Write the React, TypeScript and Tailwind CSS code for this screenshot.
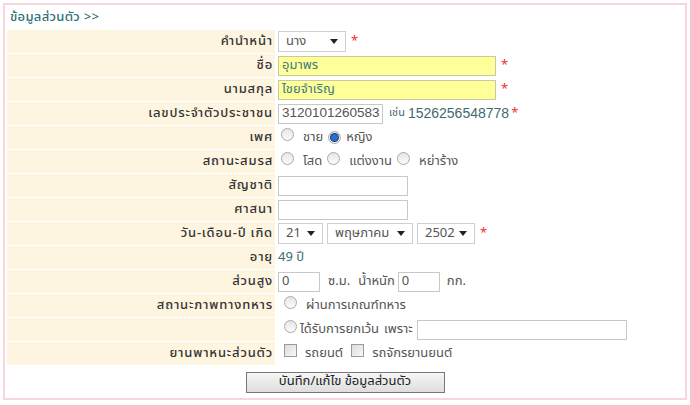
import React from 'react'

const font = { fontFamily: '"Noto Sans Thai", Tahoma, "DejaVu Sans", sans-serif' }
const num = { fontFamily: '"Liberation Sans", Arial, sans-serif' }

function Star() {
  return <span className="ml-[5px] text-[13px] leading-none text-[#e33]">*</span>
}

function Radio({ checked = false }: { checked?: boolean }) {
  return (
    <span className="inline-flex h-[13px] w-[13px] shrink-0 items-center justify-center rounded-full border border-[#a9a9a9] bg-gradient-to-b from-[#e6e6e6] to-[#fbfbfb]">
      {checked && <span className="h-[7px] w-[7px] rounded-full bg-[#2a6fc9] shadow-[0_0_0_1px_#173d7a]" />}
    </span>
  )
}

function Check() {
  return <span className="inline-block h-[13px] w-[13px] shrink-0 border border-[#9a9a9a] bg-gradient-to-br from-[#dcdcdc] to-[#f8f8f8]" />
}

function Select({ value, w }: { value: string; w: string }) {
  return (
    <div className={`flex h-[21px] items-center justify-between border border-[#cfcfcf] bg-white pl-[7px] pr-[7px] ${w}`}>
      <span className="text-[13px] text-[#555]">{value}</span>
      <svg width="8" height="5" viewBox="0 0 8 5"><path d="M0 0h8L4 5z" fill="#222" /></svg>
    </div>
  )
}

function Input({ value = '', w, yellow = false, digits = false }: { value?: string; w: string; yellow?: boolean; digits?: boolean }) {
  return (
    <div
      className={`flex h-[20px] items-center overflow-hidden border px-[3px] ${w} ${
        yellow ? 'border-[#c9c9a0] bg-[#ffff99] text-[#3f7a80]' : 'border-[#c8c8c8] bg-white text-[#555]'
      } ${digits ? 'text-[13.5px]' : 'text-[13px]'}`}
      style={digits ? num : undefined}
    >
      {value}
    </div>
  )
}

function Row({ label, children }: { label: string; children?: React.ReactNode }) {
  return (
    <>
      <div className="flex h-[23px] items-center justify-end bg-[#fdf5e0] pr-[2px] text-[13px] font-medium tracking-[0.8px] text-[#333]">{label}</div>
      <div className="flex h-[23px] items-center bg-white pl-[3px] text-[13px] text-[#555]">{children}</div>
    </>
  )
}

export default function App() {
  return (
    <div className="h-[405px] w-[690px] bg-white p-[3px]" style={font}>
      <div className="h-[397px] border-2 border-[#f9d5dd] px-[2px]">
        <div className="flex h-[25px] items-center pl-[3px] text-[13px] font-medium tracking-[0.3px] text-[#2f6f76]">ข้อมูลส่วนตัว &gt;&gt;</div>
        <div className="grid grid-cols-[268px_1fr] gap-y-px">
          <Row label="คำนำหน้า">
            <Select value="นาง" w="w-[68px]" />
            <Star />
          </Row>
          <Row label="ชื่อ">
            <Input value="อุมาพร" w="w-[218px]" yellow />
            <Star />
          </Row>
          <Row label="นามสกุล">
            <Input value="ไชยจำเริญ" w="w-[218px]" yellow />
            <Star />
          </Row>
          <Row label="เลขประจำตัวประชาชน">
            <Input value="3120101260583" w="w-[105px]" digits />
            <span className="ml-[6px] text-[11px] text-[#3f6a70]">เช่น</span>
            <span className="ml-[3px] text-[14px] text-[#3f6a70]" style={num}>1526256548778</span>
            <span className="ml-[2px] text-[13px] leading-none text-[#e33]">*</span>
          </Row>
          <Row label="เพศ">
            <span className="ml-[3px]"><Radio /></span>
            <span className="ml-[9px]">ชาย</span>
            <span className="ml-[5px]"><Radio checked /></span>
            <span className="ml-[5px]">หญิง</span>
          </Row>
          <Row label="สถานะสมรส">
            <span className="ml-[3px]"><Radio /></span>
            <span className="ml-[9px]">โสด</span>
            <span className="ml-[5px]"><Radio /></span>
            <span className="ml-[9px]">แต่งงาน</span>
            <span className="ml-[5px]"><Radio /></span>
            <span className="ml-[9px]">หย่าร้าง</span>
          </Row>
          <Row label="สัญชาติ">
            <Input w="w-[130px]" />
          </Row>
          <Row label="ศาสนา">
            <Input w="w-[130px]" />
          </Row>
          <Row label="วัน-เดือน-ปี เกิด">
            <Select value="21" w="w-[45px]" />
            <span className="ml-[4px]"><Select value="พฤษภาคม" w="w-[86px]" /></span>
            <span className="ml-[4px]"><Select value="2502" w="w-[58px]" /></span>
            <Star />
          </Row>
          <Row label="อายุ">
            <span className="text-[13px] text-[#3f6a70]">49 ปี</span>
          </Row>
          <Row label="ส่วนสูง">
            <Input value="0" w="w-[42px]" />
            <span className="ml-[8px]">ซ.ม.</span>
            <span className="ml-[8px]">น้ำหนัก</span>
            <span className="ml-[3px]"><Input value="0" w="w-[42px]" /></span>
            <span className="ml-[7px]">กก.</span>
          </Row>
          <Row label="สถานะภาพทางทหาร">
            <span className="ml-[6px]"><Radio /></span>
            <span className="ml-[9px]">ผ่านการเกณฑ์ทหาร</span>
          </Row>
          <Row label="">
            <span className="ml-[6px]"><Radio /></span>
            <span className="ml-[3px]">ได้รับการยกเว้น</span>
            <span className="ml-[5px]">เพราะ</span>
            <span className="ml-[4px]"><Input w="w-[210px]" /></span>
          </Row>
          <Row label="ยานพาหนะส่วนตัว">
            <span className="ml-[6px]"><Check /></span>
            <span className="ml-[8px]">รถยนต์</span>
            <span className="ml-[8px]"><Check /></span>
            <span className="ml-[8px]">รถจักรยานยนต์</span>
          </Row>
        </div>
        <div className="flex h-[34px] items-center justify-center">
          <div className="flex h-[21px] w-[199px] items-center justify-center border border-[#777] bg-gradient-to-b from-[#f6f6f6] to-[#dedede] text-[13px] text-[#222]">
            บันทึก/แก้ไข ข้อมูลส่วนตัว
          </div>
        </div>
      </div>
    </div>
  )
}
